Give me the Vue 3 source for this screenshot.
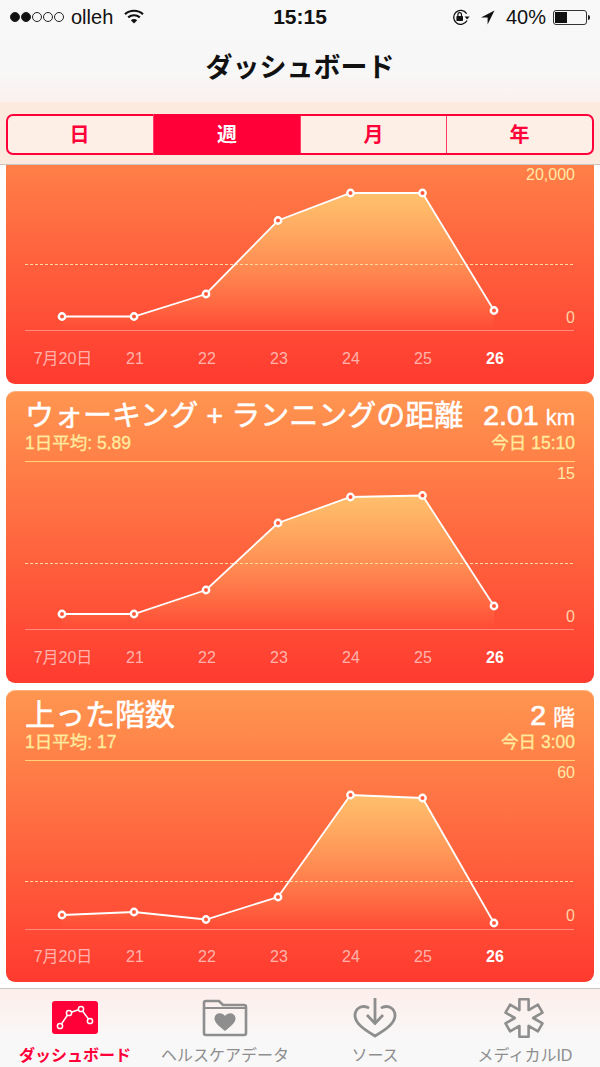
<script setup>
const segments = [
  { label: "日" },
  { label: "週", active: true },
  { label: "月" },
  { label: "年" },
];

const days = ["7月20日", "21", "22", "23", "24", "25", "26"];
const xs = [56, 128, 200, 272, 344.5, 416.5, 488];

const cards = [
  {
    id: "steps",
    max: "20,000",
    mid: 101,
    base: 167,
    ys: [153.5, 153.5, 131, 57.5, 30, 30, 147.5],
  },
  {
    id: "distance",
    title: "ウォーキング + ランニングの距離",
    long: true,
    value: "2.01",
    unit: "km",
    avg: "1日平均: 5.89",
    time: "今日 15:10",
    max: "15",
    mid: 101,
    base: 167,
    ys: [152, 152, 128, 61, 35, 33.5, 144],
  },
  {
    id: "floors",
    title: "上った階数",
    value: "2",
    unit: "階",
    avg: "1日平均: 17",
    time: "今日 3:00",
    max: "60",
    mid: 120,
    base: 168,
    ys: [154, 151, 158.5, 136, 34, 37, 162],
  },
];

function linePoints(card) {
  return card.ys.map((y, i) => `${xs[i]},${y}`).join(" ");
}

function areaPoints(card) {
  return `${xs[0]},${card.base} ${linePoints(card)} ${xs[6]},${card.base}`;
}

// six armed star of life, outline only
function starPath(cx, cy, armLen, half) {
  const inner = half / Math.sin(Math.PI / 6);
  const pts = [];
  const fmt = (x, y) => `${x.toFixed(2)},${y.toFixed(2)}`;
  for (let i = 0; i < 6; i++) {
    const a = (i * Math.PI) / 3 - Math.PI / 2;
    const dx = Math.cos(a);
    const dy = Math.sin(a);
    pts.push(fmt(cx + dx * armLen + dy * half, cy + dy * armLen - dx * half));
    pts.push(fmt(cx + dx * armLen - dy * half, cy + dy * armLen + dx * half));
    pts.push(fmt(cx + Math.cos(a + Math.PI / 6) * inner, cy + Math.sin(a + Math.PI / 6) * inner));
  }
  return "M" + pts.join("L") + "Z";
}

const star = starPath(19, 20, 18.7, 4.6);
</script>

<template>
  <div class="screen">
    <header class="top">
      <div class="status">
        <div class="status-left">
          <span class="dots">
            <i class="dot on"></i><i class="dot on"></i><i class="dot"></i><i class="dot"></i><i class="dot"></i>
          </span>
          <span class="carrier">olleh</span>
          <svg class="wifi" width="20" height="15" viewBox="0 0 20 15">
            <path d="M1 5.2C6 .6 14 .6 19 5.2" fill="none" stroke="#111" stroke-width="2.2" />
            <path d="M4.2 8.4C7.4 5.500 12.6 5.500 15.8 8.4" fill="none" stroke="#111" stroke-width="2.2" />
            <path d="M6.8 11.2C8.6 9.6 11.4 9.6 13.2 11.2L10 14.6Z" fill="#111" />
          </svg>
        </div>
        <div class="clock">15:15</div>
        <div class="status-right">
          <svg width="20" height="16" viewBox="0 0 20 16">
            <path d="M16 11.5A7 7 0 1 1 15.6 4.6" fill="none" stroke="#111" stroke-width="1.3" />
            <path d="M13.6 7.6h5l-2.5 3z" fill="#111" />
            <rect x="5.4" y="7" width="6.6" height="5" rx=".8" fill="#111" />
            <path d="M6.9 7V5.4a1.8 1.8 0 0 1 3.6 0V7" fill="none" stroke="#111" stroke-width="1.2" />
          </svg>
          <svg class="arrow" width="14" height="15" viewBox="0 0 14 15">
            <path d="M13.5.5L0 7.4h6.6V14.500Z" fill="#111" />
          </svg>
          <span class="battery-text">40%</span>
          <span class="battery"><span class="battery-fill"></span></span>
          <span class="battery-nub"></span>
        </div>
      </div>
      <div class="nav">ダッシュボード</div>
    </header>

    <div class="segment-bar">
      <div class="segments">
        <div v-for="seg in segments" :key="seg.label" class="segment" :class="{ active: seg.active }">
          {{ seg.label }}
        </div>
      </div>
    </div>

    <main class="list">
      <section v-for="card in cards" :key="card.id" class="card">
        <div class="card-head">
          <div v-if="card.title" class="row title-row">
            <span class="title" :class="{ long: card.long }">{{ card.title }}</span>
            <span class="value">{{ card.value }}<small>{{ card.unit }}</small></span>
          </div>
          <div v-if="card.title" class="row sub-row">
            <span>{{ card.avg }}</span>
            <span>{{ card.time }}</span>
          </div>
        </div>
        <div class="chart">
          <svg width="588" height="170" viewBox="0 0 588 170">
            <defs>
              <linearGradient :id="`fill-${card.id}`" gradientUnits="userSpaceOnUse" x1="0" y1="30" x2="0" :y2="card.base">
                <stop offset="0" stop-color="#ffc56f" stop-opacity="0.95" />
                <stop offset="1" stop-color="#ffc56f" stop-opacity="0" />
              </linearGradient>
            </defs>
            <polygon :points="areaPoints(card)" :fill="`url(#fill-${card.id})`" />
            <line x1="19" x2="568" :y1="card.mid + 0.5" :y2="card.mid + 0.5" class="grid-mid" />
            <line x1="19" x2="568" :y1="card.base + 0.5" :y2="card.base + 0.5" class="grid-base" />
            <polyline :points="linePoints(card)" class="trend" />
            <circle v-for="(y, i) in card.ys" :key="i" :cx="xs[i]" :cy="y" r="3.2" class="pt" />
          </svg>
          <span class="axis axis-max">{{ card.max }}</span>
          <span class="axis axis-zero">0</span>
        </div>
        <div class="days">
          <span v-for="(d, i) in days" :key="d" class="day" :class="{ today: i === 6 }">{{ d }}</span>
        </div>
      </section>
    </main>

    <nav class="tabs">
      <div class="tab active">
        <svg width="46" height="40" viewBox="0 0 46 40">
          <rect x="0" y="3" width="46" height="33" rx="3" fill="#ff0038" />
          <polyline points="8,28 17,15 29,11 38,23" fill="none" stroke="#fff" stroke-width="1.5" />
          <g fill="#ff0038" stroke="#fff" stroke-width="1.5">
            <circle cx="8" cy="28" r="2.6" />
            <circle cx="17" cy="15" r="2.6" />
            <circle cx="29" cy="11" r="2.6" />
            <circle cx="38" cy="23" r="2.6" />
          </g>
        </svg>
        <span>ダッシュボード</span>
      </div>
      <div class="tab">
        <svg width="46" height="40" viewBox="0 0 46 40">
          <path d="M2 35V5a2 2 0 0 1 2-2h13l4 4h21a2 2 0 0 1 2 2v26a2 2 0 0 1-2 2H4a2 2 0 0 1-2-2Z" fill="none" stroke="#8e8e8e" stroke-width="2.6" />
          <path d="M2 10h42" stroke="#8e8e8e" stroke-width="2" />
          <path d="M23 33C17 28 12.500 24.500 12.500 20.500C12.500 14.500 20 13.500 23 18C26 13.500 33.500 14.500 33.500 20.500C33.500 24.500 29 28 23 33Z" fill="#8e8e8e" />
        </svg>
        <span>ヘルスケアデータ</span>
      </div>
      <div class="tab">
        <svg width="46" height="40" viewBox="0 0 46 40">
          <path d="M16 9.500C9 6.500 3 11 3 17.500C3 25.500 13 32 23 38C33 32 43 25.500 43 17.500C43 11 37 6.500 30 9.500" fill="none" stroke="#8e8e8e" stroke-width="2.8" stroke-linecap="round" />
          <path d="M23 0V25M15 17L23 25.500L31 17" fill="none" stroke="#8e8e8e" stroke-width="2.8" />
        </svg>
        <span>ソース</span>
      </div>
      <div class="tab">
        <svg width="46" height="40" viewBox="0 0 40 40">
          <path :d="star" fill="none" stroke="#8e8e8e" stroke-width="2.6" stroke-linejoin="round" />
        </svg>
        <span>メディカルID</span>
      </div>
    </nav>
  </div>
</template>

<style>
html,
body {
  margin: 0;
  background: #fff;
}
</style>

<style scoped>
.screen {
  width: 600px;
  height: 1067px;
  display: flex;
  flex-direction: column;
  overflow: hidden;
  font-family: "Liberation Sans", "Noto Sans CJK JP", sans-serif;
  background: #fff;
}

.top {
  height: 102px;
  flex-shrink: 0;
  background: linear-gradient(#f8f8f8 0, #f8f7f7 70%, #faf1ee 100%);
}

.status {
  height: 34px;
  display: grid;
  grid-template-columns: 1fr auto 1fr;
  align-items: center;
  color: #111;
  font-size: 20px;
}

.status-left {
  display: flex;
  align-items: center;
  padding-left: 10px;
}

.dots {
  display: flex;
  gap: 1px;
  margin-right: 7px;
}

.dot {
  width: 8px;
  height: 8px;
  border: 1px solid #222;
  border-radius: 50%;
  display: block;
}

.dot.on {
  background: #111;
}

.carrier {
  margin-right: 11px;
}

.wifi {
  margin-top: -2px;
}

.clock {
  font-weight: 700;
  font-size: 21px;
}

.status-right {
  display: flex;
  align-items: center;
  justify-content: flex-end;
  padding-right: 10px;
}

.arrow {
  margin-left: 10px;
}

.battery-text {
  margin-left: 11px;
  margin-right: 7px;
}

.battery {
  width: 34px;
  height: 15px;
  box-sizing: border-box;
  border: 1px solid #333;
  border-radius: 3px;
  padding: 1px;
  display: block;
}

.battery-fill {
  display: block;
  width: 12px;
  height: 100%;
  background: #111;
}

.battery-nub {
  width: 2px;
  height: 5px;
  background: #222;
  margin-left: 1px;
  border-radius: 0 2px 2px 0;
}

.nav {
  height: 68px;
  line-height: 68px;
  text-align: center;
  font-size: 27px;
  font-weight: 700;
  color: #111;
}

.segment-bar {
  height: 63px;
  flex-shrink: 0;
  box-sizing: border-box;
  padding: 12px 6px 0;
  background: #fdeade;
  border-bottom: 1px solid #cbc6c3;
}

.segments {
  height: 41px;
  display: grid;
  grid-template-columns: repeat(4, 1fr);
  box-sizing: border-box;
  border: 2px solid #ff0038;
  border-radius: 7px;
  background: #fdeee6;
}

.segment {
  display: flex;
  align-items: center;
  justify-content: center;
  color: #ff0038;
  font-size: 20px;
  font-weight: 700;
  line-height: 24px;
  border-left: 1px solid #ff3d66;
}

.segment:first-child {
  border-left: 0;
  padding-right: 3px;
}

.segment.active {
  background: #ff0038;
  color: #fff;
  margin: -2px 0 -2px -1px;
}

.list {
  flex: 1;
  min-height: 0;
  display: flex;
  flex-direction: column;
  justify-content: flex-end;
  gap: 6.5px;
  padding: 0 6px 6px;
  overflow: hidden;
}

.card {
  flex-shrink: 0;
  height: 292.5px;
  box-sizing: border-box;
  border-radius: 9px;
  background: linear-gradient(#ff9650, #ff3a2f);
  box-shadow: inset 0 1px 0 rgba(255, 255, 255, 0.25);
}

.card-head {
  height: 71px;
  box-sizing: border-box;
  margin: 0 19px;
  padding-top: 7px;
  border-bottom: 1px solid #ffd27a;
}

.row {
  display: flex;
  justify-content: space-between;
  align-items: baseline;
}

.title-row {
  height: 35px;
  line-height: 35px;
  color: #fff;
  -webkit-text-stroke: 0.5px #fff;
}

.title {
  font-size: 30px;
  white-space: nowrap;
}

.title.long {
  font-size: 29px;
  position: relative;
  top: 1px;
}

.value {
  font-size: 28.5px;
  white-space: nowrap;
  -webkit-text-stroke: 0.7px #fff;
}

.value small {
  font-size: 22px;
  margin-left: 7px;
  -webkit-text-stroke: 0.3px #fff;
}

.sub-row {
  height: 20px;
  line-height: 20px;
  font-size: 17.5px;
  color: #ffeb9f;
  -webkit-text-stroke: 0.3px #ffeb9f;
}

.chart {
  position: relative;
  height: 170px;
}

.chart svg {
  display: block;
}

.grid-mid {
  stroke: #ffd9a0;
  stroke-width: 1;
  stroke-dasharray: 3 2;
}

.grid-base {
  stroke: rgba(255, 255, 255, 0.35);
  stroke-width: 1;
}

.trend {
  fill: none;
  stroke: #fff;
  stroke-width: 1.8;
}

.pt {
  fill: #ff5a3b;
  stroke: #fff;
  stroke-width: 2.4;
}

.axis {
  position: absolute;
  right: 19px;
  font-size: 16px;
  line-height: 20px;
}

.axis-max {
  top: 2px;
  color: #ffe9a8;
}

.axis-zero {
  top: 145px;
  color: #ffd2a8;
}

.days {
  display: grid;
  grid-template-columns: repeat(7, 72px);
  padding: 16px 0 0 21px;
}

.day {
  text-align: center;
  font-size: 16px;
  line-height: 20px;
  color: rgba(255, 255, 255, 0.6);
}

.day.today {
  color: #fff;
  font-weight: 700;
}

.tabs {
  height: 79px;
  flex-shrink: 0;
  box-sizing: border-box;
  display: grid;
  grid-template-columns: repeat(4, 150px);
  border-top: 1px solid #c9c7c5;
  background: linear-gradient(#fdeeea, #f8f8f8 65%);
}

.tab {
  display: flex;
  flex-direction: column;
  align-items: center;
  padding-top: 9px;
  font-size: 16px;
  line-height: 20px;
  color: #8e8e8e;
  white-space: nowrap;
}

.tab svg {
  display: block;
  margin-bottom: 8px;
}

.tab.active {
  color: #ff0038;
  font-weight: 700;
}
</style>
